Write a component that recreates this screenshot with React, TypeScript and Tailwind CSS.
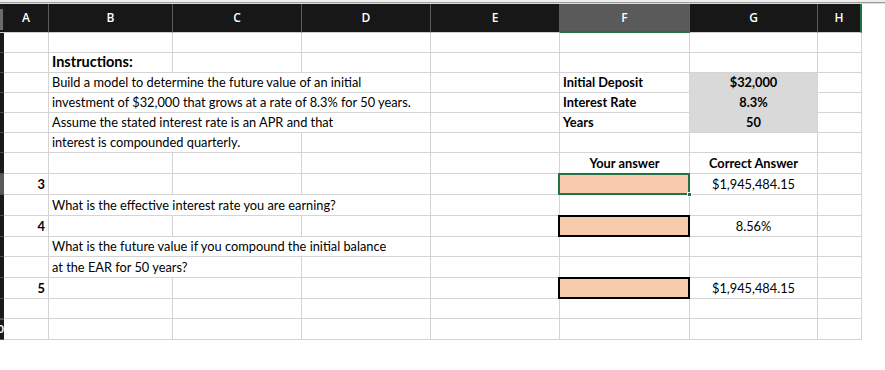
import React from "react";

const COLS =
  "grid grid-cols-[4px_45px_124px_129px_129px_129px_130px_128px_44px] w-[862px]";

type CellProps = {
  span?: 1 | 2 | 3;
  className?: string;
  children?: React.ReactNode;
};

function Cell({ span = 1, className = "", children }: CellProps) {
  const spanCls = span === 3 ? "col-span-3" : span === 2 ? "col-span-2" : "";
  return (
    <div
      className={`relative flex items-end pb-[3px] px-[3px] whitespace-nowrap border-r border-b border-[#d4d4d4] text-[12.8px] leading-none text-black ${spanCls} ${className}`}
    >
      {children}
    </div>
  );
}

function Strip({ className = "", children }: { className?: string; children?: React.ReactNode }) {
  return (
    <div className={`relative overflow-hidden bg-[#1a1a1a] border-b border-[#4a4a4a] ${className}`}>
      {children}
    </div>
  );
}

function Boxed({ green = false }: { green?: boolean }) {
  return (
    <Cell className="">
      <div
        className={`absolute left-[-2px] top-[-1px] right-[-1px] bottom-[-1px] bg-[#f8cbad] border-2 ${
          green ? "border-[#217346]" : "border-black"
        }`}
      />
      {green && (
        <div className="absolute right-[-3px] bottom-[-3px] w-[5px] h-[5px] bg-[#217346] border border-white z-10" />
      )}
    </Cell>
  );
}

function Row({ h, children }: { h: string; children: React.ReactNode }) {
  return <div className={`${COLS} ${h}`}>{children}</div>;
}

export default function App() {
  const font = { fontFamily: "Lato, 'Open Sans', sans-serif" };
  const hdr =
    "flex items-center justify-center bg-[#171717] border-r border-[#5c5c5c] border-b border-b-[#cfcfcf] text-white text-[12px] font-semibold";
  return (
    <div className="w-[885px] h-[370px] bg-white overflow-hidden" style={font}>
      <div className="h-[2px] bg-[#ededed]" />
      <div className="h-[1px] bg-[#9d9d9d]" />
      <div className="h-[1px] bg-[#dcdcdc]" />
      {/* column header */}
      <div className={`${COLS} h-[29px]`} style={{ fontFamily: "'Open Sans', sans-serif" }}>
        <div className="bg-[#1a1a1a] border-b border-[#cfcfcf] flex flex-col">
          <div className="h-[5px]" />
          <div className="h-[21px] w-[3px] bg-[#6b6b6b]" />
        </div>
        <div className={hdr}>A</div>
        <div className={hdr}>B</div>
        <div className={hdr}>C</div>
        <div className={hdr}>D</div>
        <div className={hdr}>E</div>
        <div className="flex items-center justify-center bg-[#5a5a5a] border-r border-[#5c5c5c] border-b-2 border-b-[#217346] text-white text-[12px] font-semibold">
          F
        </div>
        <div className={hdr}>G</div>
        <div className="flex items-center justify-center bg-[#171717] border-r-2 border-[#217346] border-b border-b-[#cfcfcf] text-white text-[12px] font-semibold">
          H
        </div>
      </div>

      {/* r0 */}
      <Row h="h-[20px]">
        <Strip />
        <Cell /><Cell /><Cell /><Cell /><Cell /><Cell /><Cell /><Cell />
      </Row>
      {/* r1 */}
      <Row h="h-[20px]">
        <Strip />
        <Cell />
        <Cell className="text-[14.5px] font-bold">Instructions:</Cell>
        <Cell /><Cell /><Cell /><Cell /><Cell /><Cell />
      </Row>
      {/* r2 */}
      <Row h="h-[20px]">
        <Strip />
        <Cell />
        <Cell span={3}>Build a model to determine the future value of an initial</Cell>
        <Cell />
        <Cell className="font-bold">Initial Deposit</Cell>
        <Cell className="justify-center bg-[#d9d9d9] border-b-[#d9d9d9] text-[#0070c0] font-bold">$32,000</Cell>
        <Cell />
      </Row>
      {/* r3 */}
      <Row h="h-[20px]">
        <Strip />
        <Cell />
        <Cell span={3}>investment of $32,000 that grows at a rate of 8.3% for 50 years.</Cell>
        <Cell />
        <Cell className="font-bold">Interest Rate</Cell>
        <Cell className="justify-center bg-[#d9d9d9] border-b-[#d9d9d9] text-[#0070c0] font-bold">8.3%</Cell>
        <Cell />
      </Row>
      {/* r4 */}
      <Row h="h-[20px]">
        <Strip />
        <Cell />
        <Cell span={3}>Assume the stated interest rate is an APR and that</Cell>
        <Cell />
        <Cell className="font-bold">Years</Cell>
        <Cell className="justify-center bg-[#d9d9d9] text-[#0070c0] font-bold">50</Cell>
        <Cell />
      </Row>
      {/* r5 */}
      <Row h="h-[20px]">
        <Strip />
        <Cell />
        <Cell span={2}>interest is compounded quarterly.</Cell>
        <Cell /><Cell /><Cell /><Cell /><Cell />
      </Row>
      {/* r6 */}
      <Row h="h-[21px]">
        <Strip />
        <Cell /><Cell /><Cell /><Cell /><Cell />
        <Cell className="justify-center font-bold">Your answer</Cell>
        <Cell className="justify-center font-bold">Correct Answer</Cell>
        <Cell />
      </Row>
      {/* r7 */}
      <Row h="h-[21px]">
        <Strip className="bg-[#5a5a5a] border-r border-r-[#217346]" />
        <Cell className="justify-end font-bold">3</Cell>
        <Cell /><Cell /><Cell /><Cell />
        <Boxed green />
        <Cell className="justify-center">$1,945,484.15</Cell>
        <Cell />
      </Row>
      {/* r8 */}
      <Row h="h-[21px]">
        <Strip />
        <Cell />
        <Cell span={3}>What is the effective interest rate you are earning?</Cell>
        <Cell /><Cell /><Cell /><Cell />
      </Row>
      {/* r9 */}
      <Row h="h-[21px]">
        <Strip />
        <Cell className="justify-end font-bold">4</Cell>
        <Cell /><Cell /><Cell /><Cell />
        <Boxed />
        <Cell className="justify-center">8.56%</Cell>
        <Cell />
      </Row>
      {/* r10 */}
      <Row h="h-[20px]">
        <Strip />
        <Cell />
        <Cell span={3}>What is the future value if you compound the initial balance</Cell>
        <Cell /><Cell /><Cell /><Cell />
      </Row>
      {/* r11 */}
      <Row h="h-[21px]">
        <Strip />
        <Cell />
        <Cell span={2}>at the EAR for 50 years?</Cell>
        <Cell /><Cell /><Cell /><Cell /><Cell />
      </Row>
      {/* r12 */}
      <Row h="h-[21px]">
        <Strip />
        <Cell className="justify-end font-bold">5</Cell>
        <Cell /><Cell /><Cell /><Cell />
        <Boxed />
        <Cell className="justify-center">$1,945,484.15</Cell>
        <Cell />
      </Row>
      {/* r13 */}
      <Row h="h-[20px]">
        <Strip />
        <Cell /><Cell /><Cell /><Cell /><Cell /><Cell /><Cell /><Cell />
      </Row>
      {/* r14 */}
      <Row h="h-[21px]">
        <Strip className="border-t border-t-[#217346] border-b-[#217346]">
          <span className="absolute right-[0px] top-[3px] text-white text-[11px] font-bold leading-none">0</span>
        </Strip>
        <Cell /><Cell /><Cell /><Cell /><Cell /><Cell /><Cell /><Cell />
      </Row>
    </div>
  );
}
